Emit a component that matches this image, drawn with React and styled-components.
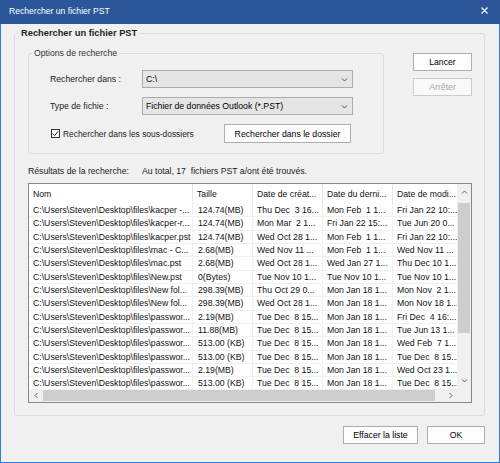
import React from "react"
import styled, { createGlobalStyle } from "styled-components"

const GlobalStyle = createGlobalStyle`
  html, body {
    margin: 0;
    padding: 0;
  }
  body {
    font-family: "Liberation Sans", Arial, sans-serif;
    font-size: 8.7px;
    color: #000;
    background: #fff;
  }
  * {
    box-sizing: border-box;
  }
`

const columns = [
  { title: "Nom", width: 164 },
  { title: "Taille", width: 60 },
  { title: "Date de créat...", width: 70 },
  { title: "Date du derni...", width: 70 },
  { title: "Date de modi...", width: 72 },
]

const base = "C:\\Users\\Steven\\Desktop\\files\\"

const rows = [
  [base + "kacper -...", "124.74(MB)", "Thu Dec  3 16...", "Mon Feb  1 1...", "Fri Jan 22 10:..."],
  [base + "kacper-r...", "124.74(MB)", "Mon Mar  2 1...", "Fri Jan 22 15:...", "Tue Jun 20 0..."],
  [base + "kacper.pst", "124.74(MB)", "Wed Oct 28 1...", "Mon Feb  1 1...", "Fri Jan 22 10:..."],
  [base + "mac - C...", "2.68(MB)", "Wed Nov 11 ...", "Mon Feb  1 1...", "Wed Nov 11 ..."],
  [base + "mac.pst", "2.68(MB)", "Wed Oct 28 1...", "Wed Jan 27 1...", "Thu Dec 10 1..."],
  [base + "New.pst", "0(Bytes)", "Tue Nov 10 1...", "Tue Nov 10 1...", "Tue Nov 10 1..."],
  [base + "New fol...", "298.39(MB)", "Thu Oct 29 0...", "Mon Jan 18 1...", "Mon Nov  2 1..."],
  [base + "New fol...", "298.39(MB)", "Wed Oct 28 1...", "Mon Jan 18 1...", "Mon Nov 18 1..."],
  [base + "passwor...", "2.19(MB)", "Tue Dec  8 15...", "Mon Jan 18 1...", "Fri Dec  4 16:..."],
  [base + "passwor...", "11.88(MB)", "Tue Dec  8 15...", "Mon Jan 18 1...", "Tue Jun 13 1..."],
  [base + "passwor...", "513.00 (KB)", "Tue Dec  8 15...", "Mon Jan 18 1...", "Wed Feb  7 1..."],
  [base + "passwor...", "513.00 (KB)", "Tue Dec  8 15...", "Mon Jan 18 1...", "Tue Dec  8 15..."],
  [base + "passwor...", "2.19(MB)", "Tue Dec  8 15...", "Mon Jan 18 1...", "Wed Oct 23 1..."],
  [base + "passwor...", "513.00 (KB)", "Tue Dec  8 15...", "Mon Jan 18 1...", "Tue Dec  8 15..."],
]

const gridColumns = columns.map((c) => c.width + "px").join(" ")

function Chevron({ dir = "down", color = "#606060", size = 7 }) {
  const paths = {
    down: "M1 2.5 L3.5 5 L6 2.5",
    up: "M1 4.5 L3.5 2 L6 4.5",
    left: "M4.5 1 L2 3.5 L4.5 6",
    right: "M2.5 1 L5 3.5 L2.5 6",
  }
  return (
    <svg width={size} height={size} viewBox='0 0 7 7'>
      <path d={paths[dir]} fill='none' stroke={color} strokeWidth='1' />
    </svg>
  )
}

function App() {
  return (
    <>
      <GlobalStyle />
      <Window>
        <TitleBar>
          <span>Rechercher un fichier PST</span>
          <svg width='7' height='7' viewBox='0 0 7 7'>
            <path d='M0.5 0.5 L6.5 6.5 M6.5 0.5 L0.5 6.5' stroke='#fff' strokeWidth='1.2' />
          </svg>
        </TitleBar>
        <Body>
          <OuterGroup>
            <OuterLegend>Rechercher un fichier PST</OuterLegend>
            <TopRow>
              <OptionsGroup>
                <InnerLegend>Options de recherche</InnerLegend>
                <OptionsGrid>
                  <FieldLabel>Rechercher dans :</FieldLabel>
                  <Combo>
                    <span>C:\</span>
                    <Chevron dir='down' color='#505050' />
                  </Combo>
                  <FieldLabel>Type de fichie :</FieldLabel>
                  <Combo>
                    <span>Fichier de données Outlook (*.PST)</span>
                    <Chevron dir='down' color='#505050' />
                  </Combo>
                  <CheckRow>
                    <CheckLabel>
                      <CheckBox>
                        <svg width='7' height='7' viewBox='0 0 7 7'>
                          <path d='M0.8 3.6 L2.7 5.5 L6.2 1.2' fill='none' stroke='#222' strokeWidth='1' />
                        </svg>
                      </CheckBox>
                      Rechercher dans les sous-dossiers
                    </CheckLabel>
                    <Button $width={127}>Rechercher dans le dossier</Button>
                  </CheckRow>
                </OptionsGrid>
              </OptionsGroup>
              <SideButtons>
                <Button $width={59}>Lancer</Button>
                <Button $width={59} disabled>
                  Arrêter
                </Button>
              </SideButtons>
            </TopRow>
            <ResultsLine>
              <ResultsLabel>Résultats de la recherche:</ResultsLabel>
              <span>Au total, 17&nbsp; fichiers PST a/ont été trouvés.</span>
            </ResultsLine>
            <ListView>
              <ListContent>
                <HeaderRow>
                  {columns.map((c) => (
                    <HeaderCell key={c.title}>{c.title}</HeaderCell>
                  ))}
                </HeaderRow>
                {rows.map((r, i) => (
                  <DataRow key={i}>
                    {r.map((v, j) => (
                      <DataCell key={j}>{v}</DataCell>
                    ))}
                  </DataRow>
                ))}
              </ListContent>
              <VScroll>
                <ArrowBox $vertical>
                  <Chevron dir='up' />
                </ArrowBox>
                <Thumb $vertical $size={130} />
                <Spacer />
                <ArrowBox $vertical>
                  <Chevron dir='down' />
                </ArrowBox>
              </VScroll>
              <HScroll>
                <ArrowBox>
                  <Chevron dir='left' />
                </ArrowBox>
                <Thumb $size={392} />
                <Spacer />
                <ArrowBox>
                  <Chevron dir='right' />
                </ArrowBox>
              </HScroll>
              <Corner />
            </ListView>
          </OuterGroup>
          <Footer>
            <Button $width={75}>Effacer la liste</Button>
            <Button $width={58}>OK</Button>
          </Footer>
        </Body>
      </Window>
    </>
  )
}

export default App

const Window = styled.div`
  width: 500px;
  height: 463px;
  display: flex;
  flex-direction: column;
  overflow: hidden;
`

const TitleBar = styled.div`
  height: 24px;
  flex: none;
  background: #2b579a;
  color: #fff;
  font-size: 8.6px;
  display: flex;
  align-items: center;
  justify-content: space-between;
  padding: 0 12px 3px 9px;
`

const Body = styled.div`
  flex: 1;
  display: flex;
  flex-direction: column;
  background: #f0f0f0;
  border: 1px solid #2e7fd9;
  border-top: none;
  padding: 3px 14px 0 13px;
`

const OuterGroup = styled.fieldset`
  margin: 0;
  min-width: 0;
  border: 1px solid #dcdcdc;
  border-radius: 3px;
  padding: 8px 12px 12px 13px;
  display: flex;
  flex-direction: column;
`

const OuterLegend = styled.legend`
  font-size: 9.3px;
  font-weight: 700;
  line-height: 12px;
  color: #1e1e1e;
  padding: 0 3px;
  margin-left: -10px;
`

const TopRow = styled.div`
  display: flex;
  align-items: flex-start;
  justify-content: space-between;
`

const OptionsGroup = styled.fieldset`
  margin: 0;
  min-width: 0;
  width: 356px;
  border: 1px solid #dcdcdc;
  border-radius: 3px;
  padding: 11px 30px 11px 21px;
`

const InnerLegend = styled.legend`
  line-height: 12px;
  color: #333;
  padding: 0 2px;
  margin-left: -18px;
`

const OptionsGrid = styled.div`
  display: grid;
  grid-template-columns: 92px 211px;
  grid-auto-rows: 18px;
  row-gap: 9px;
  align-items: center;
`

const FieldLabel = styled.div`
  color: #222;
`

const Combo = styled.div`
  height: 18px;
  background: #e5e5e5;
  border: 1px solid #acacac;
  display: flex;
  align-items: center;
  justify-content: space-between;
  padding: 0 4px 0 3px;
`

const CheckRow = styled.div`
  grid-column: 1 / -1;
  height: 19px;
  margin-top: 1px;
  display: flex;
  align-items: center;
  justify-content: space-between;
  padding-right: 2px;
`

const CheckLabel = styled.div`
  display: flex;
  align-items: center;
  gap: 3px;
  padding-left: 1px;
  color: #222;
  font-size: 8.4px;
`

const CheckBox = styled.span`
  width: 9px;
  height: 9px;
  border: 1px solid #333;
  background: #fff;
  display: flex;
  align-items: center;
  justify-content: center;
`

const Button = styled.button`
  width: ${(p) => p.$width}px;
  height: 18px;
  margin: 0;
  padding: 0;
  font-family: inherit;
  font-size: 8.7px;
  color: #000;
  background: #fdfdfd;
  border: 1px solid #adadad;
  white-space: nowrap;

  &:disabled {
    color: #a6a6a6;
    border-color: #cccccc;
    background: #f9f9f9;
  }

  ${CheckRow} & {
    height: 19px;
  }
`

const SideButtons = styled.div`
  margin-top: 6px;
  display: flex;
  flex-direction: column;
  gap: 7px;
`

const ResultsLine = styled.div`
  margin: 11px 0 6px;
  line-height: 12px;
  display: flex;
  color: #222;
`

const ResultsLabel = styled.span`
  width: 114px;
`

const ListView = styled.div`
  height: 220px;
  background: #fff;
  border: 1px solid #828790;
  display: grid;
  grid-template-columns: 1fr 14px;
  grid-template-rows: 1fr 13px;
  overflow: hidden;
`

const ListContent = styled.div`
  overflow: hidden;
  min-width: 0;
`

const HeaderRow = styled.div`
  display: grid;
  grid-template-columns: ${gridColumns};
  height: 20px;
`

const HeaderCell = styled.div`
  display: flex;
  align-items: center;
  padding-left: 4px;
  border-right: 1px solid #e5e5e5;
  white-space: nowrap;
  overflow: hidden;
  color: #111;
`

const DataRow = styled.div`
  display: grid;
  grid-template-columns: ${gridColumns};
  height: 13.33px;
`

const DataCell = styled.div`
  padding-left: 4px;
  line-height: 13px;
  white-space: pre;
  overflow: hidden;
  color: #111;
  border-right: 1px solid #f0f0f0;
  border-bottom: 1px solid #f0f0f0;

  &:nth-child(2) {
    padding-left: 5px;
  }
`

const VScroll = styled.div`
  background: #f0f0f0;
  display: flex;
  flex-direction: column;
  align-items: stretch;
`

const HScroll = styled.div`
  background: #f0f0f0;
  display: flex;
  align-items: stretch;
`

const ArrowBox = styled.div`
  flex: none;
  ${(p) => (p.$vertical ? "height: 17px;" : "width: 14px;")}
  display: flex;
  align-items: center;
  justify-content: center;
`

const Thumb = styled.div`
  flex: none;
  background: #cdcdcd;
  ${(p) =>
    p.$vertical
      ? `height: ${p.$size}px; margin: 2px 1px 0;`
      : `width: ${p.$size}px; margin: 1px 0;`}
`

const Spacer = styled.div`
  flex: 1;
`

const Corner = styled.div`
  background: #f0f0f0;
`

const Footer = styled.div`
  margin-top: 10px;
  display: flex;
  justify-content: flex-end;
  gap: 9px;
`
